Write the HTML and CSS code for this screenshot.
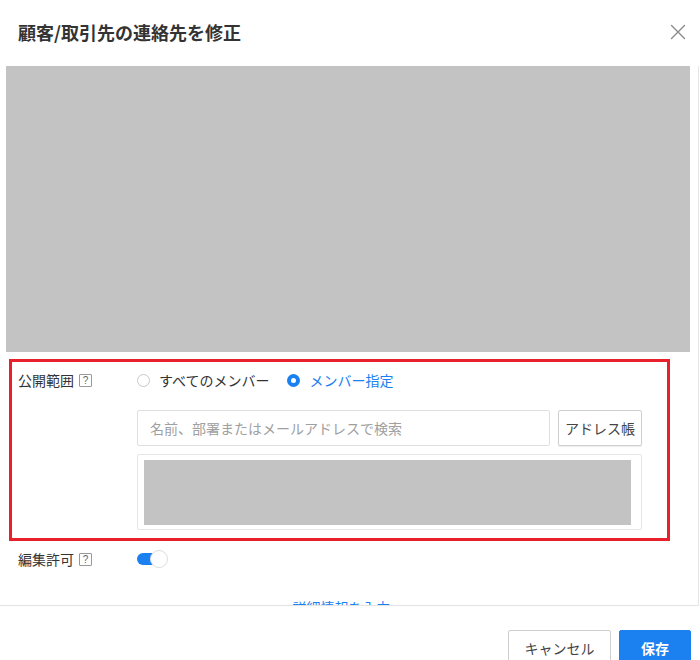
FILE: index.html
```html
<!DOCTYPE html>
<html lang="ja">
<head>
    <meta charset="UTF-8">
    <meta name="viewport" content="width=device-width, initial-scale=1.0">
    <title>顧客/取引先の連絡先を修正</title>
    <link rel="stylesheet" href="styles.css">
</head>
<body>

    <div class="dialog">
      <div class="dialog-header">
        <h1 class="dialog-title">顧客/取引先の連絡先を修正</h1>
        <button class="close-btn" aria-label="閉じる">
          <svg width="16" height="16" viewBox="0 0 16 16" fill="none">
            <path d="M1.5 1.5l13 13M14.5 1.5l-13 13" stroke="#8a8a8a" stroke-width="1.4" stroke-linecap="round" />
          </svg>
        </button>
      </div>

      <div class="dialog-body">
        <div class="placeholder-top"></div>

        <div class="highlight">
          <div class="form-row">
            <div class="form-label">公開範囲 <span class="help">?</span></div>
            <div class="form-field">
              <div class="radios">
                <label class="radio"><span class="radio-dot"></span>すべてのメンバー</label>
                <label class="radio checked"><span class="radio-dot"></span>メンバー指定</label>
              </div>
              <div class="search-row">
                <input class="search-input" type="text" placeholder="名前、部署またはメールアドレスで検索">
                <button class="btn-address">アドレス帳</button>
              </div>
              <div class="member-box">
                <div class="member-list"></div>
              </div>
            </div>
          </div>
        </div>

        <div class="form-row plain">
          <div class="form-label">編集許可 <span class="help">?</span></div>
          <div class="form-field">
            <span class="toggle"><span class="toggle-knob"></span></span>
          </div>
        </div>

        <div class="more-link">詳細情報を入力 ⌄</div>
      </div>

      <div class="dialog-footer">
        <button class="btn btn-cancel">キャンセル</button>
        <button class="btn btn-save">保存</button>
      </div>
    </div>

</body>
</html>
```

FILE: styles.css
```css
:root {
  --blue: #1b80f0;
  --red: #e8202b;
  --text: #333;
  --gray-block: #c3c3c3;
  --line: #e3e3e3;
}

* {
  box-sizing: border-box;
}

body {
  margin: 0;
  font-family: "Noto Sans CJK JP", "Noto Sans", sans-serif;
  color: var(--text);
  background: #fff;
}

.dialog {
  width: 700px;
  height: 660px;
  display: flex;
  flex-direction: column;
  overflow: hidden;
}

.dialog-header {
  height: 66px;
  flex: 0 0 66px;
  display: flex;
  justify-content: space-between;
  padding: 19px 9px 0 18px;
}

.dialog-title {
  margin: 0;
  font-size: 18px;
  font-weight: bold;
  line-height: 26px;
  color: #333;
}

.close-btn {
  width: 26px;
  height: 26px;
  border: 0;
  padding: 0;
  background: none;
  display: flex;
  align-items: center;
  justify-content: center;
  cursor: pointer;
}

.dialog-body {
  flex: 1;
  min-height: 0;
  overflow: hidden;
  border-bottom: 1px solid var(--line);
  border-right: 1px solid #e6e6e6;
  margin-right: 1px;
}

.placeholder-top {
  height: 286px;
  margin-left: 6px;
  width: 684px;
  background: var(--gray-block);
}

.highlight {
  margin: 7px 0 0 9px;
  width: 661px;
  border: 3px solid var(--red);
  padding: 8px 0 8px 6px;
}

.form-row {
  display: flex;
  align-items: flex-start;
}

.form-row.plain {
  padding: 8px 0 0 18px;
}

.form-label {
  width: 119px;
  flex: 0 0 119px;
  height: 20px;
  font-size: 14px;
  line-height: 20px;
  display: flex;
  align-items: center;
  gap: 5px;
}

.help {
  width: 13px;
  height: 13px;
  border: 1px solid #999;
  border-radius: 1px;
  font-size: 10px;
  line-height: 11px;
  text-align: center;
  color: #666;
  font-family: "Liberation Sans", Arial, sans-serif;
}

.form-field {
  width: 505px;
}

.radios {
  display: flex;
  gap: 18px;
  height: 20px;
  align-items: center;
}

.radio {
  display: flex;
  align-items: center;
  gap: 9px;
  font-size: 14px;
  line-height: 20px;
  color: #333;
}

.radio-dot {
  width: 13px;
  height: 13px;
  border: 1px solid #c8c8c8;
  border-radius: 50%;
  background: #fff;
}

.radio.checked {
  color: var(--blue);
}

.radio.checked .radio-dot {
  border: 4px solid var(--blue);
}

.search-row {
  display: flex;
  gap: 8px;
  margin-top: 20px;
}

.search-input {
  width: 413px;
  height: 36px;
  border: 1px solid #e0e0e0;
  border-radius: 2px;
  padding: 0 12px;
  font-family: inherit;
  font-size: 14px;
  color: var(--text);
}

.search-input::placeholder {
  color: #a0a0a0;
}

.btn-address {
  width: 84px;
  height: 36px;
  border: 1px solid #cfcfcf;
  border-radius: 2px;
  background: #fff;
  font-family: inherit;
  font-size: 14px;
  color: #444;
  padding: 0;
  box-shadow: 0 1px 1px rgba(0, 0, 0, 0.08);
}

.member-box {
  margin-top: 8px;
  height: 76px;
  border: 1px solid #e6e6e6;
  border-radius: 2px;
  padding: 5px 10px 4px 6px;
}

.member-list {
  height: 100%;
  background: var(--gray-block);
}

.toggle {
  display: block;
  position: relative;
  width: 31px;
  height: 20px;
}

.toggle::before {
  content: "";
  position: absolute;
  left: 0;
  top: 4px;
  width: 26px;
  height: 12px;
  border-radius: 6px;
  background: var(--blue);
}

.toggle-knob {
  position: absolute;
  right: 0;
  top: 1px;
  width: 18px;
  height: 18px;
  border-radius: 50%;
  background: #fff;
  border: 1px solid #ddd;
}

.more-link {
  margin-top: 28px;
  text-align: center;
  font-size: 14px;
  line-height: 20px;
  color: var(--blue);
}

.dialog-footer {
  flex: 0 0 54px;
  min-height: 0;
  overflow: hidden;
  display: flex;
  justify-content: flex-end;
  align-items: flex-start;
  gap: 8px;
  padding: 24px 9px 0 0;
}

.btn {
  height: 36px;
  flex-shrink: 0;
  border-radius: 2px;
  font-family: inherit;
  font-size: 14px;
  padding: 0;
  cursor: pointer;
}

.btn-cancel {
  width: 103px;
  border: 1px solid #cfcfcf;
  background: #fff;
  color: #444;
}

.btn-save {
  width: 72px;
  border: 1px solid var(--blue);
  background: var(--blue);
  color: #fff;
  font-weight: bold;
}
```
